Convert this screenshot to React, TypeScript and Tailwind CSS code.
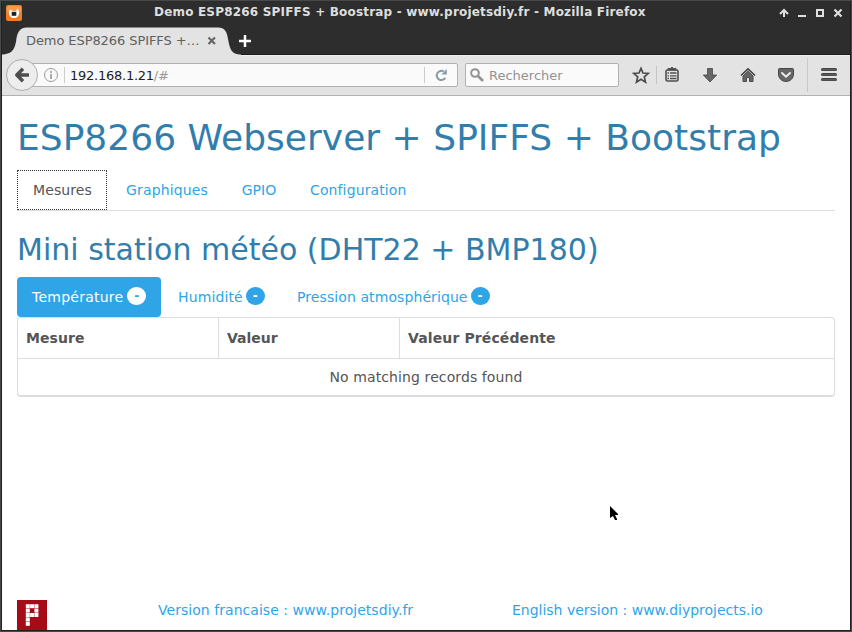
import React from "react";

const CELLS = [
  [0, 0], [1, 0], [2, 0],
  [0, 1], [2, 1],
  [0, 2], [1, 2], [2, 2],
  [0, 3],
  [0, 4],
];

function TitleBar() {
  return (
    <div className="flex h-[24px] items-start">
      <svg className="ml-[4px] mt-[4px] h-4 w-4" viewBox="0 0 16 16">
        <rect x="0" y="0" width="16" height="16" rx="2" fill="#ee7d2c" />
        <rect x="1" y="1" width="14" height="7" rx="2" fill="#f79a50" />
        <path d="M4 4.500L6.500 6h4L11 3.500C12.500 4.500 13 6 13 8c0 3-2.200 5-5 5s-5-2-5-5c0-1.500.3-2.500 1-3.500z" fill="#fff" />
        <rect x="5.700" y="6.800" width="4.600" height="4" fill="#222" />
      </svg>
      <h1 className="ml-[132px] mt-[2px] text-[12px] leading-[18px] font-bold tracking-[0.19px] text-[#dedede] whitespace-nowrap">
        Demo ESP8266 SPIFFS + Boostrap - www.projetsdiy.fr - Mozilla Firefox
      </h1>
      <svg className="ml-auto mr-[7px] mt-[7px] h-[10px] w-[64px] shrink-0" viewBox="0 0 64 10" fill="none" stroke="#dedede">
        <path d="M5 9V2M1 6l4-4 4 4" strokeWidth="2" />
        <path d="M19 8h8" strokeWidth="2" />
        <rect x="38" y="2" width="6" height="6" strokeWidth="2" />
        <path d="M55.500 1.500l7 7M62.500 1.500l-7 7" strokeWidth="2.200" />
      </svg>
    </div>
  );
}

function TabStrip() {
  return (
    <div className="relative mt-[2px] h-[29px]">
      <svg className="absolute left-0 top-0 h-[29px] w-[848px]" viewBox="0 0 848 29">
        <path d="M0 27h848v2H0z" fill="#1c1c1c" />
        <path d="M0 28h848v1H0z" fill="#efefef" />
        <path d="M0 29V27.500C9 27 12 24 14 15C15 6 17 .500 25 .500H216C223 .500 225 5 226 12C228 22 229 27.500 239 27.500V29Z" fill="#e3e3e3" />
        <path d="M237 14h12M243 8v12" stroke="#fff" strokeWidth="2.500" />
        <path d="M206.500 10.500l6.500 6.500M213 10.500l-6.500 6.500" stroke="#666" strokeWidth="2.200" />
      </svg>
      <span className="absolute left-[24px] top-[5px] text-[13px] leading-[18px] tracking-[-0.08px] text-[#606060] whitespace-nowrap">
        Demo ESP8266 SPIFFS +…
      </span>
    </div>
  );
}

function ToolbarIcons() {
  return (
    <svg className="h-[39px] w-[231px] shrink-0" viewBox="619 56 231 39" fill="none">
      <path d="M641 68.300l2 4.700 5.200.5-3.900 3.400 1.200 5.200-4.500-2.800-4.500 2.800 1.200-5.200-3.900-3.400 5.200-.5z" stroke="#4c4c4c" strokeWidth="1.700" />
      <path d="M656.500 66v18" stroke="#c5c5c5" />
      <rect x="666" y="70" width="12" height="11" rx="1.500" stroke="#4f4f4f" strokeWidth="1.600" />
      <path d="M668 70v-1.500h2.500L672 67l1.500 1.500h2.500V70z" fill="#4f4f4f" stroke="#4f4f4f" />
      <path d="M667.500 73h1.500m1 0h6.500M667.500 75.800h1.500m1 0h6.500M667.500 78.500h1.500m1 0h6.500" stroke="#505050" strokeWidth="1.300" />
      <path d="M707.500 68.500h5v6.500h4.200l-6.700 7-6.700-7h4.200z" fill="#666" stroke="#454545" strokeWidth=".8" />
      <path d="M741 75.500l7-6.500 7 6.500" stroke="#444" strokeWidth="1.700" />
      <path d="M743 76l5-4.700 5 4.700v5.500h-3.500v-4h-3v4H743z" fill="#666" stroke="#4c4c4c" />
      <path d="M778.500 69.500q0-1 1-1h13q1 0 1 1V74c0 4.500-3.500 7.500-7.500 7.500s-7.500-3-7.500-7.500z" fill="#666" stroke="#464646" />
      <path d="M782 73l4 3.800 4-3.800" stroke="#eee" strokeWidth="1.900" strokeLinecap="round" />
      <path d="M807.500 58v34" stroke="#c9c9c9" />
      <path d="M822.500 69.500h13M822.500 74.500h13M822.500 79.500h13" stroke="#444" strokeWidth="3" strokeLinecap="round" />
      <path d="M822 69.800h14M822 74.800h14M822 79.800h14" stroke="#666" strokeWidth="1" />
    </svg>
  );
}

function Toolbar() {
  return (
    <div className="flex h-[40px] items-start border-b border-[#b2b2b2] bg-[#e3e3e3]">
      <div className="relative ml-[19px] mt-[7px] flex h-[24px] w-[437px] shrink-0 items-center rounded-r-[2px] border border-[#b1b1b1] bg-[#fafafa] text-[13px]">
        <svg className="absolute -left-[17px] -top-[6px] h-[34px] w-[64px]" viewBox="0 0 64 34" fill="none">
          <circle cx="17" cy="17" r="15.500" fill="#ededed" stroke="#adadad" />
          <path d="M24 17H12.500M18 10.800L11.800 17l6.200 6.200" stroke="#4d4d4d" strokeWidth="3.500" strokeLinejoin="round" />
          <circle cx="46" cy="17" r="6.500" stroke="#9a9a9a" />
          <path d="M46 13v2M46 16v5" stroke="#909090" strokeWidth="1.500" />
          <path d="M59.500 9v16" stroke="#ccc" />
        </svg>
        <span className="ml-[48px] pt-[2px] tracking-[-0.25px] text-[#222]">192.168.1.21<span className="text-[#999]">/#</span></span>
        <div className="ml-auto flex h-[16px] w-[33px] items-center justify-center border-l border-[#ccc]">
          <svg className="mr-[1px] h-[14px] w-[14px]" viewBox="0 0 14 14" fill="none">
            <path d="M11.300 9.800A4.600 4.600 0 1 1 9.800 3.500" stroke="#8b9aa6" strokeWidth="2" />
            <path d="M12.800 1v5.500H7.300z" fill="#8b9aa6" />
          </svg>
        </div>
      </div>
      <div className="ml-[7px] mt-[7px] flex h-[24px] w-[154px] shrink-0 items-center rounded-[2px] border border-[#b1b1b1] bg-[#fafafa] text-[13px] text-[#929292]">
        <svg className="ml-[4px] h-[14px] w-[14px]" viewBox="0 0 14 14" fill="none" stroke="#929292">
          <circle cx="5" cy="5" r="3.800" strokeWidth="2" />
          <path d="M8 8l5 5" strokeWidth="2.600" />
        </svg>
        <span className="ml-[5px] pt-[2px]">Rechercher</span>
      </div>
      <div className="ml-auto"><ToolbarIcons /></div>
    </div>
  );
}

function Badge({ active = false }: { active?: boolean }) {
  return (
    <span
      className={
        active
          ? "mb-[2px] ml-[4px] flex h-[18px] w-[19px] items-center justify-center rounded-full bg-white text-[12px] font-bold leading-none text-[#2fa4e7]"
          : "mb-[2px] ml-[3px] flex h-[18px] w-[19px] items-center justify-center rounded-full bg-[#2fa4e7] text-[12px] font-bold leading-none text-white"
      }
    >
      -
    </span>
  );
}

function Page() {
  return (
    <main className="flex h-[534px] flex-col overflow-hidden bg-white px-[15px] text-[14px] leading-[20px] text-[#555]">
      <h1 className="mt-[22px] h-[40px] text-[36px] leading-[40px] tracking-[0.02px] text-[#317eac] whitespace-nowrap">
        ESP8266 Webserver + SPIFFS + Bootstrap
      </h1>
      <nav className="mt-[11px] flex h-[42px] border-b border-[#ddd] text-[#2fa4e7]">
        <a className="mr-[2px] mt-[1px] flex h-[40px] w-[90px] items-center border border-dotted border-[#333] pb-[1px] pl-[15px] tracking-[0.1px] text-[#555]">Mesures</a>
        <a className="flex w-[114px] items-center pl-[17px] tracking-[0.15px]">Graphiques</a>
        <a className="ml-[2px] flex w-[68px] items-center justify-center">GPIO</a>
        <a className="flex items-center pl-[17px] tracking-[0.12px]">Configuration</a>
      </nav>
      <h2 className="mt-[22px] h-[33px] text-[30px] leading-[33px] tracking-[0.01px] text-[#317eac] whitespace-nowrap">
        Mini station météo (DHT22 + BMP180)
      </h2>
      <nav className="mt-[11px] flex h-[40px] text-[#2fa4e7]">
        <a className="flex w-[144px] items-center rounded-[4px] bg-[#2fa4e7] pl-[15px] tracking-[0.25px] text-white">Température<Badge active /></a>
        <a className="ml-[2px] flex w-[117px] items-center pl-[15px] tracking-[0.12px]">Humidité<Badge /></a>
        <a className="ml-[2px] flex items-center pl-[15px] tracking-[0.09px]">Pression atmosphérique<Badge /></a>
      </nav>
      <div className="h-[80px] w-[818px] rounded-[4px] border border-b-2 border-[#ddd]">
        <div className="flex h-[41px] items-center border-b border-[#ddd] font-bold">
          <div className="flex h-full w-[201px] items-center border-r border-[#ddd] pl-[8px] tracking-[0.05px]">Mesure</div>
          <div className="flex h-full w-[181px] items-center border-r border-[#ddd] pl-[8px]">Valeur</div>
          <div className="pl-[8px] tracking-[0.12px]">Valeur Précédente</div>
        </div>
        <div className="flex h-[36px] items-center justify-center tracking-[0.1px]">No matching records found</div>
      </div>
      <footer className="mt-auto flex h-[30px] text-[#2fa4e7]">
        <svg className="h-[30px] w-[30px]" viewBox="0 0 30 30">
          <rect width="30" height="30" fill="#a60c18" />
          {CELLS.map(([c, r]) => (
            <rect key={`${c}-${r}`} x={8.8 + c * 4.3} y={4.2 + r * 4.4} width="4" height="4" fill="#fff" />
          ))}
        </svg>
        <a className="ml-[111px] w-[354px] tracking-[0.04px] whitespace-nowrap">Version francaise : www.projetsdiy.fr</a>
        <a className="whitespace-nowrap tracking-[-0.01px]">English version : www.diyprojects.io</a>
      </footer>
    </main>
  );
}

export default function App() {
  return (
    <div className="relative h-[632px] w-[852px] overflow-hidden border border-[#484a4a] font-['DejaVu_Sans',sans-serif]">
      <div className="h-full border-x border-b border-[#1f1f1f] bg-[#2d2d2d]">
        <TitleBar />
        <TabStrip />
        <Toolbar />
        <Page />
      </div>
      <svg className="absolute left-[609px] top-[505px] h-[16px] w-[10px]" viewBox="0 0 10 16">
        <path d="M0 0l8 8v1H5l2 4v1H5l-2-4-3 2z" fill="#000" />
      </svg>
    </div>
  );
}
